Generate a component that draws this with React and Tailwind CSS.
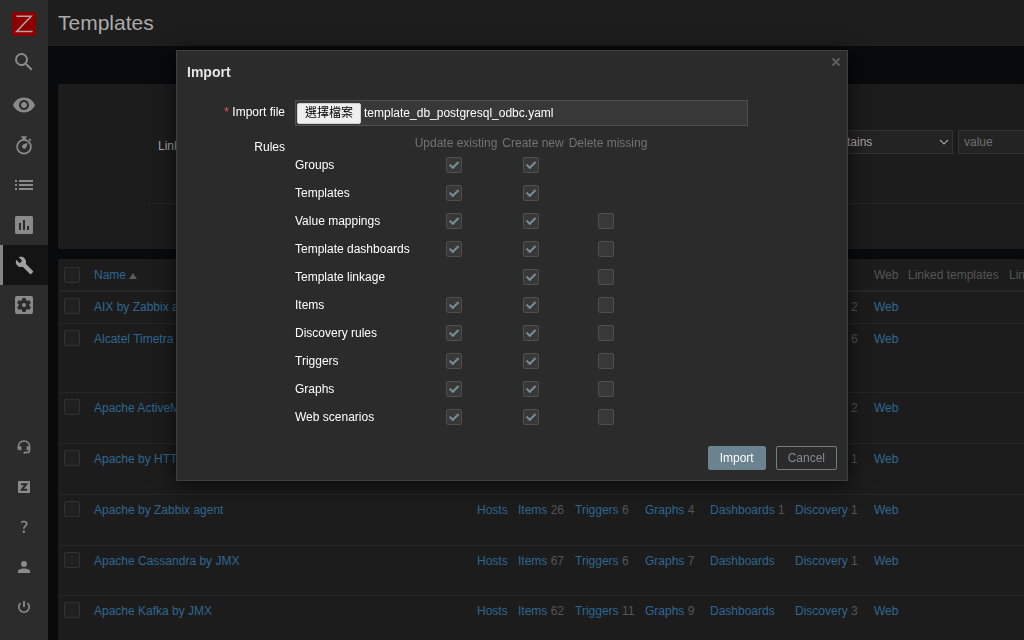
import React, { useState } from "react";
import { MdSearch, MdVisibility, MdBuild, MdSettingsApplications } from "react-icons/md";

const TimerIcon = () => (
  <svg width="24" height="24" viewBox="0 0 24 24" fill="none" stroke="currentColor">
    <circle cx="12" cy="13.8" r="6.9" strokeWidth="1.7" />
    <path d="M9.4 4h5.2" strokeWidth="1.6" />
    <path d="M12 4v3" strokeWidth="3" />
    <path d="M17 5.8l1.9 1.9" strokeWidth="1.6" />
    <path d="M15.8 9.8l-1.6 4.8a2.2 2.2 0 1 1-3-3z" fill="currentColor" stroke="none" />
  </svg>
);

const ListIcon = () => (
  <svg width="24" height="24" viewBox="0 0 24 24" fill="currentColor">
    <path d="M3 7h2v2H3zM7 7h14v2H7zM3 11h2v2H3zM7 11h14v2H7zM3 15h2v2H3zM7 15h14v2H7z" />
  </svg>
);

const ChartIcon = () => (
  <svg width="24" height="24" viewBox="0 0 24 24" fill="currentColor">
    <path
      fillRule="evenodd"
      d="M4.5 3h15A1.5 1.5 0 0 1 21 4.5v15a1.5 1.5 0 0 1-1.5 1.5h-15A1.5 1.5 0 0 1 3 19.5v-15A1.5 1.5 0 0 1 4.5 3zM7 10v7h2v-7zM11 7v10h2V7zM15 13v4h2v-4z"
    />
  </svg>
);

const HeadsetIcon = () => (
  <svg width="14" height="14" viewBox="0 0 12 12" fill="none" stroke="currentColor">
    <path d="M1.2 6.8V5.6a4.8 4.8 0 0 1 9.6 0v3.2c0 1.3-.8 2-2 2H7" strokeWidth="1.3" />
    <path d="M2.8 5.4v3.4M9.2 5.4v3.4" strokeWidth="1.9" />
    <path d="M1.2 6v2.4" strokeWidth="1.3" />
    <circle cx="6.6" cy="10.8" r="1" fill="currentColor" stroke="none" />
  </svg>
);

const ShareIcon = () => (
  <svg width="12" height="12" viewBox="0 0 12 12">
    <path d="M0 0h12v12H0z" fill="currentColor" />
    <path d="M3 3.2h5.2L3.8 8.8h5.3" fill="none" stroke="#2c2c2c" strokeWidth="2" />
  </svg>
);

const HelpIcon = () => (
  <svg width="12" height="14" viewBox="0 0 12 14" fill="none" stroke="currentColor" strokeWidth="1.7">
    <path d="M3.2 2.5C4 1.8 4.9 1.5 5.9 1.5c1.7 0 2.8.9 2.8 2.3 0 2.4-2.9 2.4-2.9 5" />
    <circle cx="5.8" cy="11.7" r="1.2" fill="currentColor" stroke="none" />
  </svg>
);

const PersonIcon = () => (
  <svg width="12" height="12" viewBox="0 0 12 12" fill="currentColor">
    <circle cx="6" cy="3" r="3" />
    <path d="M0 12v-1.7C0 8.3 3.4 7.4 6 7.4s6 .9 6 2.9V12z" />
  </svg>
);

const PowerIcon = () => (
  <svg width="14" height="14" viewBox="0 0 14 14" fill="none" stroke="currentColor" strokeWidth="1.6">
    <path d="M3.5 3.2a5.2 5.2 0 1 0 7 0" />
    <path d="M7 1v6" strokeWidth="1.8" />
  </svg>
);

const mainMenu = [
  { label: "Monitoring", icon: <MdVisibility size={24} /> },
  { label: "Services", icon: <TimerIcon /> },
  { label: "Inventory", icon: <ListIcon /> },
  { label: "Reports", icon: <ChartIcon /> },
  { label: "Configuration", icon: <MdBuild size={19} />, active: true },
  { label: "Administration", icon: <MdSettingsApplications size={24} /> },
];

const userMenu = [
  { label: "Support", icon: <HeadsetIcon /> },
  { label: "Share", icon: <ShareIcon /> },
  { label: "Help", icon: <HelpIcon /> },
  { label: "User settings", icon: <PersonIcon /> },
  { label: "Sign out", icon: <PowerIcon /> },
];

const templates = [
  { name: "AIX by Zabbix agent", height: "h-8", items: 44, triggers: 13, graphs: 6, dashboards: 1, discovery: 2 },
  { name: "Alcatel Timetra TiMOS SNMP", height: "h-[69px]", items: 16, triggers: 13, graphs: "", dashboards: "", discovery: 6 },
  { name: "Apache ActiveMQ by JMX", height: "h-[51px]", items: 6, triggers: 4, graphs: "", dashboards: "", discovery: 2 },
  { name: "Apache by HTTP", height: "h-[51px]", items: 25, triggers: 5, graphs: 4, dashboards: 1, discovery: 1 },
  { name: "Apache by Zabbix agent", height: "h-[51px]", items: 26, triggers: 6, graphs: 4, dashboards: 1, discovery: 1 },
  { name: "Apache Cassandra by JMX", height: "h-[50px]", items: 67, triggers: 6, graphs: 7, dashboards: "", discovery: 1 },
  { name: "Apache Kafka by JMX", height: "h-[51px]", items: 62, triggers: 11, graphs: 9, dashboards: "", discovery: 3 },
];

const columns = [
  { label: "Hosts", width: "w-[41px]" },
  { label: "Items", width: "w-[57px]", key: "items" },
  { label: "Triggers", width: "w-[70px]", key: "triggers" },
  { label: "Graphs", width: "w-[65px]", key: "graphs" },
  { label: "Dashboards", width: "w-[85px]", key: "dashboards" },
  { label: "Discovery", width: "w-[79px]", key: "discovery" },
  { label: "Web", width: "w-[34px]" },
];

// null means the rule has no such option
const initialRules = [
  { name: "Groups", options: [true, true, null] },
  { name: "Templates", options: [true, true, null] },
  { name: "Value mappings", options: [true, true, false] },
  { name: "Template dashboards", options: [true, true, false] },
  { name: "Template linkage", options: [null, true, false] },
  { name: "Items", options: [true, true, false] },
  { name: "Discovery rules", options: [true, true, false] },
  { name: "Triggers", options: [true, true, false] },
  { name: "Graphs", options: [true, true, false] },
  { name: "Web scenarios", options: [true, true, false] },
];

const ruleColumns = ["Update existing", "Create new", "Delete missing"];

const MenuLink = ({ item }) => (
  <a
    href="#"
    aria-label={item.label}
    className={`flex h-10 items-center justify-center border-l-[3px] pr-[3px] ${
      item.active
        ? "border-[#858585] bg-[#141414] text-[#a0a0a0]"
        : "border-transparent text-[#8a8a8a]"
    }`}
  >
    {item.icon}
  </a>
);

const Sidebar = () => (
  <aside className="flex w-12 shrink-0 flex-col justify-between bg-[#2c2c2c] pb-[13px]">
    <nav>
      <a href="#" aria-label="Zabbix" className="mx-3 mt-3 mb-1.5 block bg-[#8c0000]">
        <svg width="24" height="24" viewBox="0 0 24 24" fill="none" stroke="#b4a4a4" strokeWidth="1.5">
          <path d="M4.4 4.3h14.8L4.6 19.6h16" />
        </svg>
      </a>
      <button
        type="button"
        aria-label="Search"
        className="mb-[3px] flex h-10 w-full items-center justify-center text-[#8a8a8a]"
      >
        <MdSearch size={24} />
      </button>
      {mainMenu.map((item) => (
        <MenuLink key={item.label} item={item} />
      ))}
    </nav>
    <nav>
      {userMenu.map((item) => (
        <MenuLink key={item.label} item={item} />
      ))}
    </nav>
  </aside>
);

const Filter = () => (
  <form className="overflow-hidden rounded-xs bg-[#1c1c1c] pt-[46px] pb-[45px] text-[#a8a8a8]">
    <div className="flex items-start pl-[100px]">
      <label htmlFor="linked" className="w-24 shrink-0 pt-2">
        Linked templates
      </label>
      <input
        id="linked"
        className="h-6 w-[410px] shrink-0 border border-[#343434] bg-[#232323] px-[5px]"
      />
      <input
        aria-label="Tag"
        className="h-6 w-[150px] shrink-0 border border-[#343434] bg-[#232323] px-[5px]"
      />
      <div className="relative ml-[5px] shrink-0">
        <select
          aria-label="Operator"
          defaultValue="Contains"
          className="block h-6 w-[134px] appearance-none border border-[#343434] bg-[#232323] px-[5px]"
        >
          <option>Contains</option>
          <option>Equals</option>
        </select>
        <svg
          className="pointer-events-none absolute top-2 right-1"
          width="10"
          height="8"
          viewBox="0 0 10 8"
          fill="none"
          stroke="#a0a0a0"
          strokeWidth="1.2"
        >
          <path d="M1 2l4 4 4-4" />
        </svg>
      </div>
      <input
        aria-label="Value"
        placeholder="value"
        className="ml-[5px] h-6 w-[150px] shrink-0 border border-[#343434] bg-[#232323] px-[5px] placeholder:text-[#707070]"
      />
    </div>
    <div className="mt-[49px] ml-[90px] border-t border-[#262626]" />
  </form>
);

const RowCheckbox = ({ label }) => (
  <input
    type="checkbox"
    aria-label={label}
    className="block h-4 w-4 appearance-none rounded-xs border border-[#323232] bg-[#202020]"
  />
);

const TemplateList = () => (
  <div className="overflow-hidden rounded-xs bg-[#1c1c1c] px-0.5">
    <table className="w-full min-w-[1060px] table-fixed text-left text-[#555555]">
      <thead>
        <tr className="h-8 border-b-2 border-[#272727]">
          <th className="w-7 pl-1">
            <RowCheckbox label="Select all" />
          </th>
          <th className="w-[383px] pl-1.5 font-normal">
            <a href="#" className="inline-flex items-center gap-[3px] text-[#2f6791]">
              Name
              <svg className="mt-0.5" width="8" height="6" viewBox="0 0 8 6" fill="#5c5c5c">
                <path d="M4 0l4 6H0z" />
              </svg>
            </a>
          </th>
          {columns.map((col) => (
            <th key={col.label} className={`${col.width} pl-1.5 font-normal`}>
              {col.label}
            </th>
          ))}
          <th className="w-[101px] pl-1.5 font-normal whitespace-nowrap">Linked templates</th>
          <th className="pl-1.5 font-normal whitespace-nowrap">Linked to templates</th>
        </tr>
      </thead>
      <tbody>
        {templates.map((template) => (
          <tr
            key={template.name}
            className={`${template.height} border-b border-[#262626] align-top whitespace-nowrap`}
          >
            <td className="pt-1.5 pl-1">
              <RowCheckbox label={template.name} />
            </td>
            <td className="pt-[7px] pl-1.5">
              <a href="#" className="text-[#2f6791]">
                {template.name}
              </a>
            </td>
            {columns.map((col) => (
              <td key={col.label} className="pt-[7px] pl-1.5">
                <a href="#" className="text-[#2f6791]">
                  {col.label}
                </a>{" "}
                {col.key && template[col.key]}
              </td>
            ))}
            <td />
            <td />
          </tr>
        ))}
      </tbody>
    </table>
  </div>
);

const RuleCheckbox = ({ label, checked, onChange }) => (
  <span className="grid h-4 w-4">
    <input
      type="checkbox"
      aria-label={label}
      checked={checked}
      onChange={onChange}
      className="col-start-1 row-start-1 h-4 w-4 appearance-none rounded-xs border border-[#4f4f4f] bg-[#383838]"
    />
    {checked && (
      <svg
        className="pointer-events-none col-start-1 row-start-1"
        width="16"
        height="16"
        viewBox="0 0 16 16"
        fill="none"
        stroke="#768d99"
        strokeWidth="2"
      >
        <path d="M3.6 7.6l3.2 3.2 5.8-5.8" />
      </svg>
    )}
  </span>
);

const ImportDialog = ({ onClose }) => {
  const [fileName, setFileName] = useState("template_db_postgresql_odbc.yaml");
  const [rules, setRules] = useState(initialRules);

  const toggleRule = (name, index) => {
    setRules(
      rules.map((rule) =>
        rule.name === name
          ? { ...rule, options: rule.options.map((on, i) => (i === index ? !on : on)) }
          : rule
      )
    );
  };

  return (
    <div className="fixed inset-0 flex items-start justify-center pt-[50px]">
      <div
        role="dialog"
        aria-labelledby="import-title"
        className="w-full max-w-2xl border border-[#404040] bg-[#2b2b2b] px-2.5 pb-2.5 text-white shadow-[0_4px_20px_rgba(0,0,0,0.7)]"
      >
        {/* Title */}
        <div className="flex items-start justify-between">
          <h4 id="import-title" className="pt-3 text-[14px] leading-[18px] font-bold text-[#e4e4e4]">
            Import
          </h4>
          <button type="button" aria-label="Close" onClick={onClose} className="-mr-1 pt-1.5 text-[#5e5e5e]">
            <svg width="10" height="10" viewBox="0 0 10 10" fill="none" stroke="currentColor" strokeWidth="2">
              <path d="M1.5 1.5l7 7M8.5 1.5l-7 7" />
            </svg>
          </button>
        </div>

        {/* Form */}
        <div className="mt-[19px] flex gap-2.5">
          <label htmlFor="import-file" className="w-[98px] pt-1 text-right">
            <span className="text-[#e45959]">*</span> Import file
          </label>
          <label className="flex h-[26px] w-[453px] items-center gap-[3px] border border-[#4f4f4f] bg-[#383838] pl-px focus-within:border-[#768d99]">
            <input
              id="import-file"
              type="file"
              className="sr-only"
              onChange={(e) => setFileName(e.target.files[0]?.name ?? "")}
            />
            <span className="rounded-xs border border-[#cfcfcf] bg-[#efefef] px-[7px] leading-[19px] text-black">
              選擇檔案
            </span>
            {fileName}
          </label>
        </div>

        <div className="mt-2.5 flex gap-2.5">
          <div id="rules-label" className="w-[98px] pt-[3px] text-right">
            Rules
          </div>
          <table aria-labelledby="rules-label" className="table-fixed">
            <thead>
              <tr className="leading-[15px] text-[#737373]">
                <td className="w-[118px]" />
                <th className="w-[86px] font-normal whitespace-nowrap">{ruleColumns[0]}</th>
                <th className="w-[68px] font-normal whitespace-nowrap">{ruleColumns[1]}</th>
                <th className="w-[82px] font-normal whitespace-nowrap">{ruleColumns[2]}</th>
              </tr>
            </thead>
            <tbody>
              {rules.map((rule) => (
                <tr key={rule.name} className="h-7">
                  <th className="text-left font-normal">{rule.name}</th>
                  {rule.options.map((on, index) => (
                    <td key={ruleColumns[index]}>
                      <div className="flex justify-center pr-1">
                        {on !== null && (
                          <RuleCheckbox
                            label={`${rule.name}: ${ruleColumns[index]}`}
                            checked={on}
                            onChange={() => toggleRule(rule.name, index)}
                          />
                        )}
                      </div>
                    </td>
                  ))}
                </tr>
              ))}
            </tbody>
          </table>
        </div>

        {/* Buttons */}
        <div className="mt-[15px] flex justify-end gap-2.5">
          <button type="button" className="h-6 rounded-xs border border-[#6b8290] bg-[#6b8290] px-[11px] text-white">
            Import
          </button>
          <button
            type="button"
            onClick={onClose}
            className="h-6 rounded-xs border border-[#74807f] px-[11px] text-[#858b8d]"
          >
            Cancel
          </button>
        </div>
      </div>
    </div>
  );
};

const App = () => {
  const [dialogOpen, setDialogOpen] = useState(true);

  return (
    <div className="flex h-screen overflow-hidden bg-[#080a0b] font-['Liberation_Sans','Noto_Sans_CJK_TC',sans-serif] text-[12px] leading-4">
      <Sidebar />
      <main className="min-w-0 flex-1">
        <header className="flex h-[46px] items-center bg-[#1d1d1d] pl-2.5">
          <h1 className="text-[21px] leading-6 text-[#ababab]">Templates</h1>
        </header>
        <div className="flex flex-col gap-2.5 pt-[38px] pl-2.5">
          <Filter />
          <TemplateList />
        </div>
      </main>
      {dialogOpen && <ImportDialog onClose={() => setDialogOpen(false)} />}
    </div>
  );
};

export default App;
